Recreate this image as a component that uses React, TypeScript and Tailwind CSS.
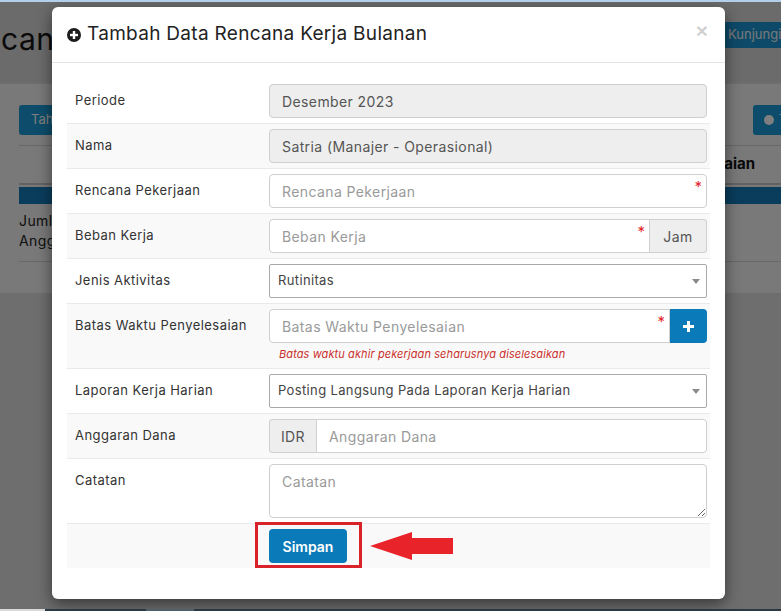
import React from "react";

const inputCls =
  "h-[34px] w-full border border-[#cfcfcf] px-3 text-[14px] tracking-[0.4px] text-[#555] outline-none placeholder:text-[#9a9a9a]";

function Row({
  label,
  striped,
  first,
  children,
}: {
  label?: string;
  striped?: boolean;
  first?: boolean;
  children: React.ReactNode;
}) {
  return (
    <div
      className={`grid grid-cols-[202px_1fr] border-t ${
        first ? "border-white" : "border-[#e8eaec]"
      } ${striped ? "bg-[#f9f9f9]" : "bg-white"}`}
    >
      <div className="whitespace-nowrap px-2 pt-[11px] text-[13px] leading-5 tracking-[0.45px] text-[#333]">
        {label}
      </div>
      <div className="py-[5px] pr-[3px]">{children}</div>
    </div>
  );
}

function Required() {
  return (
    <span className="pointer-events-none absolute right-[5px] top-[5px] text-[15px] leading-none text-[#e3262d]">
      *
    </span>
  );
}

function Caret() {
  return (
    <span className="mr-[6px] h-0 w-0 border-x-[4px] border-t-[5px] border-x-transparent border-t-[#8a8a8a]" />
  );
}

function PlusCircle() {
  return (
    <svg width="14" height="14" viewBox="0 0 14 14">
      <circle cx="7" cy="7" r="7" fill="#1c1c1c" />
      <rect x="3" y="5.8" width="8" height="2.4" fill="#fff" />
      <rect x="5.8" y="3" width="2.4" height="8" fill="#fff" />
    </svg>
  );
}

function Background() {
  return (
    <div className="w-[864px]">
      <div className="flex h-[80px] items-start justify-between bg-[#d6d6d6] pr-[19px]">
        <h1 className="mt-[17px] pl-[1px] text-[30px] leading-[40px] tracking-[0.5px] text-[#151515]">
          cana Kerja Bulanan
        </h1>
        <button className="mt-[20px] flex h-[26px] w-[133px] items-center rounded-[3px] bg-[#1a95d2] pl-[16px] text-[13px] text-[#f2f2f2]">
          Kunjungi Website
        </button>
      </div>
      <div className="mt-[2px] h-[209px] bg-[#f2f2f2] px-[19px] pt-[21px]">
        <div className="flex justify-between">
          <button className="h-[30px] rounded-[3px] bg-[#1a9ad6] px-3 text-[13px] text-white">
            Tahun 2023
          </button>
          <button className="flex h-[30px] w-[92px] items-center gap-[5px] rounded-[3px] bg-[#1a9ad6] pl-[11px] text-[13px] text-white">
            <span className="h-[10px] w-[10px] rounded-full bg-white" />
            Tambah
          </button>
        </div>
        <div className="mt-[10px] flex h-[38px] items-center justify-end border-t border-[#d0d0d0] pr-[90px] text-[15px] font-bold text-[#111]">
          Penyelesaian
        </div>
        <div className="border-t-2 border-[#c4c4c4] pt-[2px]">
          <div className="h-[17px] bg-[#147ab8]" />
        </div>
        <div className="border-b border-[#d0d0d0] pb-[10px] pt-[7px] text-[14px] leading-5 tracking-[0.4px] text-[#222]">
          <p>Jumlah Rencana</p>
          <p>Anggaran Dana</p>
        </div>
      </div>
    </div>
  );
}

export default function App() {
  return (
    <div className="flex h-[611px] w-[781px] flex-col overflow-hidden font-['Inter',sans-serif]">
      <div className="h-[2px] bg-[#b3cfea]" />
      <div className="relative h-[607px] overflow-hidden bg-[#dcdcdc]">
        <Background />
        <div className="absolute inset-0 bg-black/50" />

        <div className="absolute left-[52px] top-[5px] h-[592px] w-[673px] rounded-[6px] bg-white shadow-[0_5px_15px_rgba(0,0,0,0.5)]">
          <div className="flex h-[56px] items-center justify-between border-b border-[#e5e5e5] px-[15px]">
            <div className="flex items-center gap-[6px]">
              <PlusCircle />
              <h4 className="text-[19px] tracking-[0.3px] text-[#222]">
                Tambah Data Rencana Kerja Bulanan
              </h4>
            </div>
            <button className="mb-[9px] mr-[2px] font-['Liberation_Sans',sans-serif] text-[21px] font-bold leading-none text-black/20">
              ×
            </button>
          </div>

          <div className="px-[15px] pt-[15px]">
            <Row label="Periode" first>
              <input
                className={`${inputCls} rounded-[4px] bg-[#eeeeee]`}
                value="Desember 2023"
                readOnly
              />
            </Row>
            <Row label="Nama" striped>
              <input
                className={`${inputCls} rounded-[4px] bg-[#eeeeee]`}
                value="Satria (Manajer - Operasional)"
                readOnly
              />
            </Row>
            <Row label="Rencana Pekerjaan">
              <div className="relative">
                <input
                  className={`${inputCls} rounded-[4px] bg-white`}
                  placeholder="Rencana Pekerjaan"
                />
                <Required />
              </div>
            </Row>
            <Row label="Beban Kerja" striped>
              <div className="flex">
                <div className="relative flex-1">
                  <input
                    className={`${inputCls} rounded-l-[4px] bg-white`}
                    placeholder="Beban Kerja"
                  />
                  <Required />
                </div>
                <span className="flex h-[34px] w-[57px] items-center justify-center rounded-r-[4px] border border-l-0 border-[#cfcfcf] bg-[#eeeeee] text-[14px] tracking-[0.4px] text-[#555]">
                  Jam
                </span>
              </div>
            </Row>
            <Row label="Jenis Aktivitas">
              <div className="flex h-[34px] items-center justify-between rounded-[2px] border border-[#aaa] bg-white pl-2 text-[13px] tracking-[0.36px] text-[#444]">
                Rutinitas
                <Caret />
              </div>
            </Row>
            <Row label="Batas Waktu Penyelesaian" striped>
              <div className="flex">
                <div className="relative flex-1">
                  <input
                    className={`${inputCls} rounded-l-[4px] bg-white`}
                    placeholder="Batas Waktu Penyelesaian"
                  />
                  <Required />
                </div>
                <button className="flex h-[34px] w-[37px] items-center justify-center rounded-r-[4px] bg-[#0a7bb8]">
                  <svg width="11" height="11" viewBox="0 0 11 11">
                    <rect x="0" y="4" width="11" height="3" fill="#fff" />
                    <rect x="4" y="0" width="3" height="11" fill="#fff" />
                  </svg>
                </button>
              </div>
              <p className="ml-[10px] mt-[2px] text-[11px] italic leading-[18px] tracking-[0.1px] text-[#c9302c]">
                Batas waktu akhir pekerjaan seharusnya diselesaikan
              </p>
            </Row>
            <Row label="Laporan Kerja Harian">
              <div className="flex h-[34px] items-center justify-between rounded-[2px] border border-[#aaa] bg-white pl-2 text-[13px] tracking-[0.36px] text-[#444]">
                Posting Langsung Pada Laporan Kerja Harian
                <Caret />
              </div>
            </Row>
            <Row label="Anggaran Dana" striped>
              <div className="flex">
                <span className="flex h-[34px] w-[47px] items-center justify-center rounded-l-[4px] border border-r-0 border-[#cfcfcf] bg-[#eeeeee] text-[14px] tracking-[0.4px] text-[#555]">
                  IDR
                </span>
                <input
                  className={`${inputCls} flex-1 rounded-r-[4px] bg-white`}
                  placeholder="Anggaran Dana"
                />
              </div>
            </Row>
            <Row label="Catatan">
              <textarea
                className="block h-[54px] w-full rounded-[4px] border border-[#cfcfcf] bg-white px-3 py-[6px] text-[14px] tracking-[0.4px] text-[#555] outline-none placeholder:text-[#9a9a9a]"
                placeholder="Catatan"
              />
            </Row>
            <Row striped>
              <div className="relative w-[78px]">
                <button className="h-[34px] w-[78px] rounded-[4px] bg-[#0a7bb8] text-[14px] font-semibold text-white">
                  Simpan
                </button>
                <span className="absolute -left-[14px] -top-[7px] h-[46px] w-[107px] border-[3px] border-[#d9232b]" />
                <svg
                  className="absolute left-[101px] top-[3px]"
                  width="83"
                  height="28"
                  viewBox="0 0 83 28"
                >
                  <polygon
                    points="0,14 42,0 42,6 83,6 83,22 42,22 42,28"
                    fill="#e8232a"
                  />
                </svg>
              </div>
            </Row>
          </div>
        </div>
      </div>
      <div className="flex h-[2px]">
        <div className="w-[45px] bg-[#d9d9d9]" />
        <div className="w-[101px] bg-[#2a3843]" />
        <div className="w-[48px] bg-[#4f606b]" />
        <div className="flex-1 bg-[#2a3843]" />
      </div>
    </div>
  );
}
